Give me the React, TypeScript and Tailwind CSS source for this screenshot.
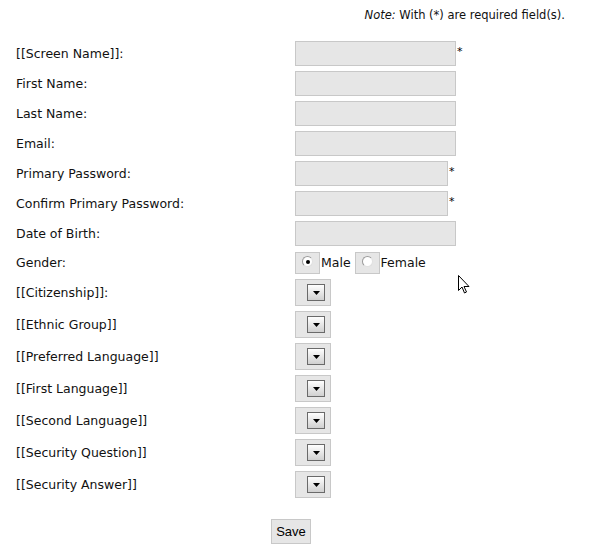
const textFields = [
  { label: '[[Screen Name]]:', width: 'w-[161px]', required: true },
  { label: 'First Name:', width: 'w-[161px]' },
  { label: 'Last Name:', width: 'w-[161px]' },
  { label: 'Email:', width: 'w-[161px]' },
  { label: 'Primary Password:', width: 'w-[153px]', required: true },
  { label: 'Confirm Primary Password:', width: 'w-[153px]', required: true },
  { label: 'Date of Birth:', width: 'w-[161px]' },
];

const selectFields = [
  '[[Citizenship]]:',
  '[[Ethnic Group]]',
  '[[Preferred Language]]',
  '[[First Language]]',
  '[[Second Language]]',
  '[[Security Question]]',
  '[[Security Answer]]',
];

const SelectBox = () => (
  <div className="w-[36px] h-[27px] bg-[#e6e6e6] border border-[#c8c8c8] flex items-center justify-end pr-[5px]">
    <div className="w-[18px] h-[17px] border border-[#6a6a6a] bg-gradient-to-b from-white to-[#d0d0d0] flex items-center justify-center">
      <svg width="7" height="4" viewBox="0 0 7 4">
        <path d="M0 0h7L3.5 4z" fill="#000" />
      </svg>
    </div>
  </div>
);

const Radio = ({ checked }: { checked?: boolean }) => (
  <div className="w-[25px] h-[22px] bg-[#e6e6e6] border border-[#c8c8c8] flex items-start justify-center pt-[3px]">
    <div className="w-[11px] h-[11px] rounded-full bg-white border border-[#9a9a9a] border-r-[#e0e0e0] border-b-[#e0e0e0] flex items-center justify-center">
      {checked && <div className="w-[4px] h-[4px] rounded-full bg-black" />}
    </div>
  </div>
);

export default function App() {
  return (
    <div className="relative w-[592px] h-[559px] bg-white text-[#111] font-['DejaVu_Sans',Verdana,sans-serif] text-[12.5px]">
      <div className="flex justify-end pr-[27px] pt-[7px] text-[11.5px] h-[41px]">
        <span>
          <i>Note:</i> With (*) are required field(s).
        </span>
      </div>

      <div className="flex flex-col pl-[16px] gap-[5px]">
        {textFields.map((f) => (
          <div key={f.label} className="flex items-center h-[25px]">
            <div className="w-[279px] pt-[2px]">{f.label}</div>
            <div className={`${f.width} h-[25px] bg-[#e6e6e6] border border-[#c8c8c8]`} />
            {f.required && <span className="ml-[1px] -mt-[3px] text-[11px] text-black">*</span>}
          </div>
        ))}
      </div>

      <div className="flex items-center pl-[16px] mt-[6px] h-[22px]">
        <div className="w-[279px]">Gender:</div>
        <Radio checked />
        <span className="ml-[1px]">Male</span>
        <div className="ml-[4px]">
          <Radio />
        </div>
        <span className="ml-[1px]">Female</span>
      </div>

      <div className="flex flex-col pl-[16px] gap-[5px] mt-[5px]">
        {selectFields.map((label) => (
          <div key={label} className="flex items-center h-[27px]">
            <div className="w-[279px] pt-[2px]">{label}</div>
            <SelectBox />
          </div>
        ))}
      </div>

      <div className="pl-[271px] mt-[21px]">
        <button className="w-[40px] h-[25px] bg-[#e6e6e6] border border-[#c8c8c8] text-[13px] font-['Liberation_Sans',Arial,sans-serif] text-black">
          Save
        </button>
      </div>

      <svg className="absolute left-[458px] top-[275px]" width="12" height="19" viewBox="0 0 12 19">
        <path d="M0.5 0.5v15l3.5-3.5 2.5 6 2-1-2.5-5.5h5z" fill="#fff" stroke="#000" strokeWidth="1" strokeLinejoin="miter" />
      </svg>
    </div>
  );
}
